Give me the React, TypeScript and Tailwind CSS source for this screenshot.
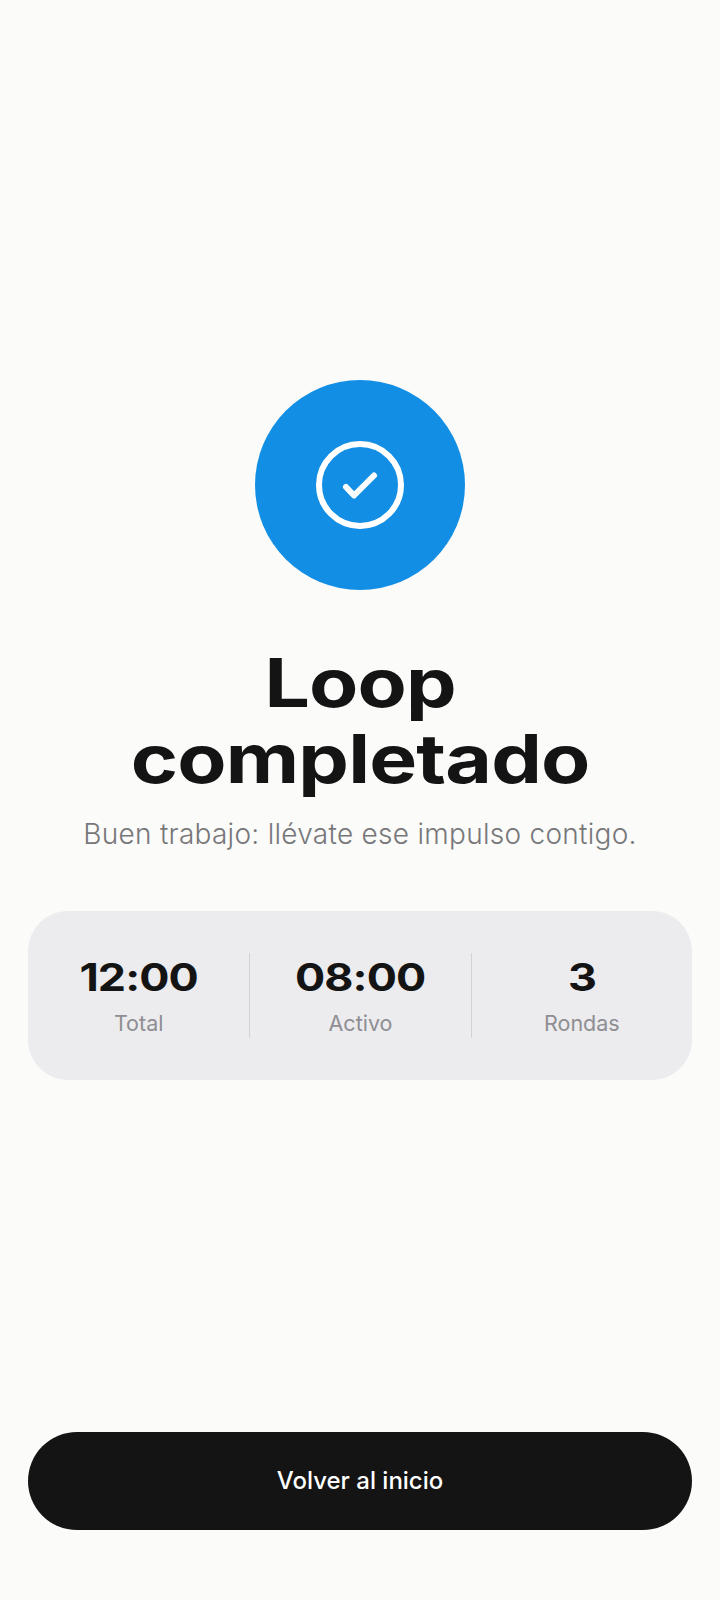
const stats = [
  { value: '12:00', label: 'Total' },
  { value: '08:00', label: 'Activo' },
  { value: '3', label: 'Rondas' },
]

function CheckBadge() {
  return (
    <div className="flex h-[210px] w-[210px] items-center justify-center rounded-full bg-[#128fe5]">
      <svg width="88" height="88" viewBox="0 0 88 88" fill="none" stroke="#fff" strokeLinecap="round" strokeLinejoin="round">
        <circle cx="44" cy="44" r="41" strokeWidth="6" />
        <path d="M30 46 L38 54.5 L58 34.5" strokeWidth="6" />
      </svg>
    </div>
  )
}

export default function App() {
  return (
    <div className="flex h-[1600px] flex-col items-center bg-[#fbfbf9] px-[28px] pt-[380px] pb-[70px] font-['Inter',sans-serif]">
      <CheckBadge />

      <h1 className="mt-[55px] scale-x-[1.2] text-center text-[67px] leading-[76px] font-bold tracking-[-0.01em] text-[#141414]">
        Loop
        <br />
        completado
      </h1>
      <p className="mt-[19px] text-center text-[28px] leading-[36px] font-light tracking-[0.01em] text-[#77777a]">
        Buen trabajo: llévate ese impulso contigo.
      </p>

      <div className="mt-[59px] grid w-full grid-cols-3 rounded-[40px] bg-[#ecebed] py-[42px]">
        {stats.map((stat, i) => (
          <div key={stat.label} className={i > 0 ? 'border-l border-[#d3d2d5] text-center' : 'text-center'}>
            <p className="scale-x-[1.18] text-[38px] leading-[48px] font-bold tracking-[-0.02em] text-[#141414]">{stat.value}</p>
            <p className="mt-[8px] text-[21.5px] leading-[29px] text-[#8e8e93]">{stat.label}</p>
          </div>
        ))}
      </div>

      <button className="mt-auto h-[98px] w-full rounded-[49px] bg-[#141414] text-[24px] font-medium text-white">
        Volver al inicio
      </button>
    </div>
  )
}
